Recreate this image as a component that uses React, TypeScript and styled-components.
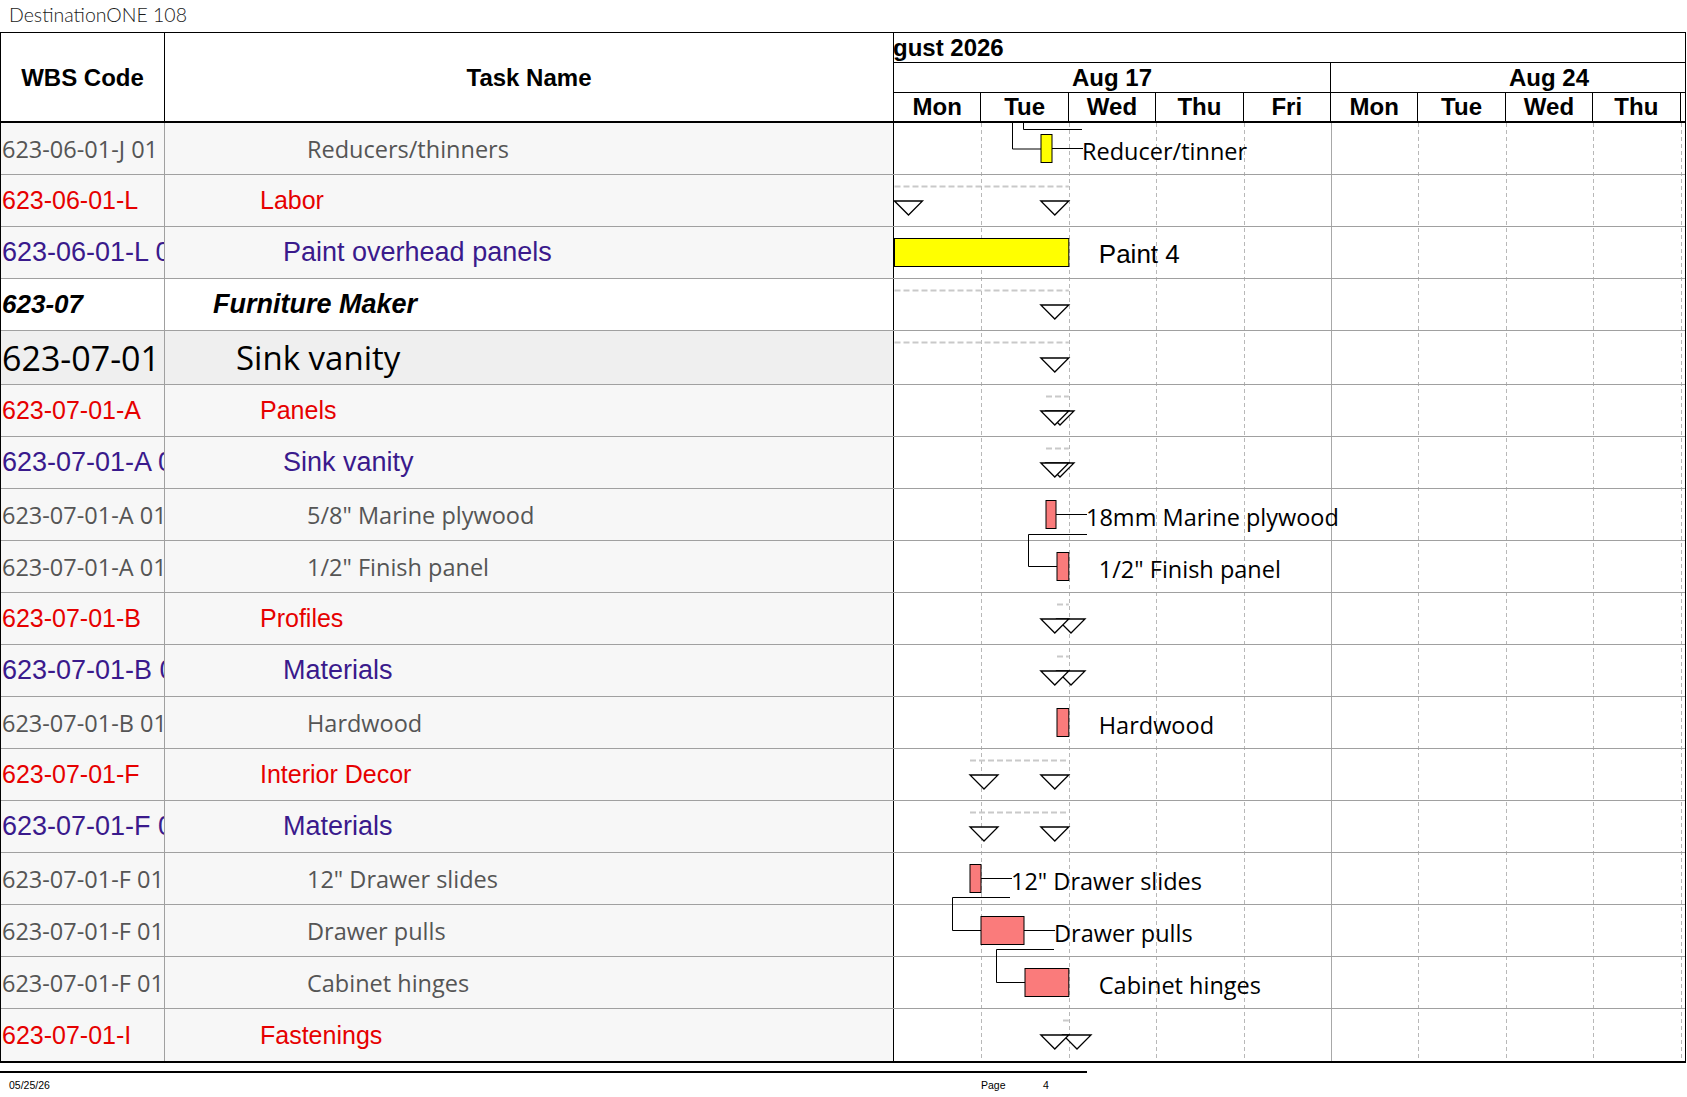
import React from 'react';
import styled, { createGlobalStyle, css } from 'styled-components';

const GlobalStyle = createGlobalStyle`
  html, body { margin: 0; padding: 0; background: #fff; }
  body { font-family: "Liberation Sans", Arial, sans-serif; color: #000; }
  *, *::before, *::after { box-sizing: border-box; }
`;

const DAY = 87.4;
const WBS_W = 164;
const TASK_W = 729;
const GANTT_W = 791;
const GRID_GRAY = '#a0a0a0';

type Kind = 'gray' | 'red' | 'purple' | 'group' | 'major';

interface TaskRow {
  wbs: string;
  name: string;
  kind: Kind;
  h: number;
}

const rows: TaskRow[] = [
  { wbs: '623-06-01-J 01', name: 'Reducers/thinners', kind: 'gray', h: 52 },
  { wbs: '623-06-01-L', name: 'Labor', kind: 'red', h: 52 },
  { wbs: '623-06-01-L 01', name: 'Paint overhead panels', kind: 'purple', h: 52 },
  { wbs: '623-07', name: 'Furniture Maker', kind: 'group', h: 52 },
  { wbs: '623-07-01', name: 'Sink vanity', kind: 'major', h: 54 },
  { wbs: '623-07-01-A', name: 'Panels', kind: 'red', h: 52 },
  { wbs: '623-07-01-A 01', name: 'Sink vanity', kind: 'purple', h: 52 },
  { wbs: '623-07-01-A 01.1', name: '5/8" Marine plywood', kind: 'gray', h: 52 },
  { wbs: '623-07-01-A 01.2', name: '1/2" Finish panel', kind: 'gray', h: 52 },
  { wbs: '623-07-01-B', name: 'Profiles', kind: 'red', h: 52 },
  { wbs: '623-07-01-B 01', name: 'Materials', kind: 'purple', h: 52 },
  { wbs: '623-07-01-B 01.1', name: 'Hardwood', kind: 'gray', h: 52 },
  { wbs: '623-07-01-F', name: 'Interior Decor', kind: 'red', h: 52 },
  { wbs: '623-07-01-F 01', name: 'Materials', kind: 'purple', h: 52 },
  { wbs: '623-07-01-F 01.1', name: '12" Drawer slides', kind: 'gray', h: 52 },
  { wbs: '623-07-01-F 01.2', name: 'Drawer pulls', kind: 'gray', h: 52 },
  { wbs: '623-07-01-F 01.3', name: 'Cabinet hinges', kind: 'gray', h: 52 },
  { wbs: '623-07-01-I', name: 'Fastenings', kind: 'red', h: 52 },
];

const tops: number[] = [];
rows.reduce((acc, r) => {
  tops.push(acc);
  return acc + r.h;
}, 0);
const BODY_H = rows.reduce((a, r) => a + r.h, 0);

const indentFor: Record<Kind, number> = {
  group: 48,
  major: 71,
  red: 95,
  purple: 118,
  gray: 142,
};

const bgFor: Record<Kind, string> = {
  group: '#ffffff',
  major: '#efefef',
  red: '#f7f7f7',
  purple: '#f7f7f7',
  gray: '#f7f7f7',
};

const fontFor = (kind: Kind, part: 'wbs' | 'name') => {
  switch (kind) {
    case 'gray':
      return css`
        font-family: 'Open Sans', 'Liberation Sans', sans-serif;
        font-size: 23.5px;
        color: #555555;
      `;
    case 'red':
      return css`
        font-family: 'Liberation Sans', Arial, sans-serif;
        font-size: 25px;
        color: #e60000;
      `;
    case 'purple':
      return css`
        font-family: 'Liberation Sans', Arial, sans-serif;
        font-size: 27px;
        color: #3a1a8c;
      `;
    case 'group':
      return css`
        font-family: 'Liberation Sans', Arial, sans-serif;
        font-size: ${part === 'wbs' ? 26 : 27}px;
        font-weight: 700;
        font-style: italic;
        color: #000;
      `;
    case 'major':
      return css`
        font-family: 'Open Sans', 'Liberation Sans', sans-serif;
        font-size: ${part === 'wbs' ? 34 : 33}px;
        color: #000;
      `;
  }
};

const Page = styled.div`
  width: 1687px;
`;

const TitleBar = styled.div`
  height: 32px;
  padding-left: 9px;
  font-family: Lato, 'Open Sans', sans-serif;
  font-weight: 300;
  font-size: 19.5px;
  line-height: 30px;
  color: #1a1a1a;
`;

const Frame = styled.div`
  width: 1686px;
  border: 1px solid #000;
  border-bottom-width: 2px;
`;

const HeaderGrid = styled.div`
  display: grid;
  grid-template-columns: ${WBS_W}px ${TASK_W}px ${GANTT_W}px;
  height: 90px;
  border-bottom: 2px solid #000;
`;

const HeadLabel = styled.div`
  display: flex;
  align-items: center;
  justify-content: center;
  border-right: 1px solid #000;
  font-weight: 700;
  font-size: 24px;
  padding-top: 2px;
`;

const Timescale = styled.div`
  display: flex;
  flex-direction: column;
  overflow: hidden;
  width: ${GANTT_W}px;
`;

const Tier = styled.div<{ $h: number; $last?: boolean }>`
  display: flex;
  flex: none;
  height: ${(p) => p.$h}px;
  border-bottom: ${(p) => (p.$last ? 'none' : '1px solid #000')};
  font-weight: 700;
  font-size: 24px;
  white-space: nowrap;
`;

const MonthCell = styled.div`
  display: flex;
  align-items: center;
  flex: none;
  width: 100%;
`;

const MonthText = styled.span`
  margin-left: -33px;
`;

const ScaleCell = styled.div<{ $w: number }>`
  display: flex;
  align-items: center;
  justify-content: center;
  flex: none;
  width: ${(p) => p.$w}px;
  border-right: 1px solid #000;
`;

const Body = styled.div`
  display: flex;
`;

const RowsCol = styled.div`
  width: ${WBS_W + TASK_W}px;
  flex: none;
`;

const TableRow = styled.div<{ $h: number; $bg: string; $last?: boolean }>`
  display: grid;
  grid-template-columns: ${WBS_W}px ${TASK_W}px;
  height: ${(p) => p.$h}px;
  background: ${(p) => p.$bg};
  border-bottom: ${(p) => (p.$last ? 'none' : `1px solid ${GRID_GRAY}`)};
`;

const WbsCell = styled.div<{ $kind: Kind }>`
  display: flex;
  align-items: center;
  padding-left: 1px;
  border-right: 1px solid ${GRID_GRAY};
  overflow: hidden;
  white-space: nowrap;
  ${(p) => fontFor(p.$kind, 'wbs')}
`;

const NameCell = styled.div<{ $kind: Kind }>`
  display: flex;
  align-items: center;
  padding-left: ${(p) => indentFor[p.$kind]}px;
  border-right: 1px solid #000;
  overflow: hidden;
  white-space: nowrap;
  ${(p) => fontFor(p.$kind, 'name')}
`;

const GanttSvg = styled.svg`
  display: block;
  flex: none;
  width: ${GANTT_W}px;
  background: #fff;
`;

const FooterRule = styled.div`
  width: 1087px;
  margin-top: 8px;
  border-top: 2px solid #000;
`;

const FooterRow = styled.div`
  display: grid;
  grid-template-columns: 972px 62px auto;
  padding-left: 9px;
  margin-top: 6px;
  font-family: 'Liberation Sans Narrow', 'Liberation Sans', Arial, sans-serif;
  font-size: 10.5px;
  line-height: 12px;
  color: #000;
`;

/* ---------- Gantt drawing ---------- */

interface Bar {
  row: number;
  x1: number;
  x2: number;
  color: string;
  label: string;
  arial?: boolean;
  link?: boolean;
}

interface Summary {
  row: number;
  x1: number;
  x2: number;
  start: boolean;
  end: boolean;
}

const END = 2 * DAY; // end of Tuesday
const YELLOW = '#ffff00';
const SALMON = '#fa7b7b';

const bars: Bar[] = [
  { row: 0, x1: 147, x2: 158, color: YELLOW, label: 'Reducer/tinner', link: true },
  { row: 2, x1: 0.5, x2: END, color: YELLOW, label: 'Paint 4', arial: true },
  { row: 7, x1: 152, x2: 162, color: SALMON, label: '18mm Marine plywood', link: true },
  { row: 8, x1: 163, x2: END, color: SALMON, label: '1/2" Finish panel' },
  { row: 11, x1: 163, x2: END, color: SALMON, label: 'Hardwood' },
  { row: 14, x1: 76, x2: 87, color: SALMON, label: '12" Drawer slides', link: true },
  { row: 15, x1: 87, x2: 130, color: SALMON, label: 'Drawer pulls', link: true },
  { row: 16, x1: 131, x2: END, color: SALMON, label: 'Cabinet hinges' },
];

const summaries: Summary[] = [
  { row: 1, x1: 0.5, x2: END, start: true, end: true },
  { row: 3, x1: 0.5, x2: END, start: false, end: true },
  { row: 4, x1: 0.5, x2: END, start: false, end: true },
  { row: 5, x1: 152, x2: END, start: true, end: true },
  { row: 6, x1: 152, x2: END, start: true, end: true },
  { row: 9, x1: 163, x2: END, start: true, end: true },
  { row: 10, x1: 163, x2: END, start: true, end: true },
  { row: 12, x1: 76, x2: END, start: true, end: true },
  { row: 13, x1: 76, x2: END, start: true, end: true },
  { row: 17, x1: 169, x2: END, start: true, end: true },
];

const links: string[] = [
  '129.5,0 129.5,6.5 188,6.5',
  '118.5,0 118.5,26 147,26',
  `193,${tops[7] + 45.5} 134.5,${tops[7] + 45.5} 134.5,${tops[8] + 25.5} 163,${tops[8] + 25.5}`,
  `116,${tops[14] + 44.5} 58.5,${tops[14] + 44.5} 58.5,${tops[15] + 25.5} 87,${tops[15] + 25.5}`,
  `160,${tops[15] + 44.5} 102.5,${tops[15] + 44.5} 102.5,${tops[16] + 25.5} 131,${tops[16] + 25.5}`,
];

const tri = (x: number, y: number) => `${x},${y} ${x + 28},${y} ${x + 14},${y + 14}`;

const GanttChart: React.FC = () => (
  <GanttSvg viewBox={`0 0 ${GANTT_W} ${BODY_H}`} height={BODY_H}>
    {/* day grid */}
    {Array.from({ length: 9 }, (_, i) => i + 1).map((k) => {
      const x = Math.round(k * DAY) + 0.5;
      return (
        <line
          key={`v${k}`}
          x1={x}
          x2={x}
          y1={0}
          y2={BODY_H}
          stroke={k === 5 ? '#a8a8a8' : '#b8b8b8'}
          strokeWidth={1}
          strokeDasharray={k === 5 ? undefined : '4 3'}
        />
      );
    })}
    {/* row lines */}
    {rows.slice(0, -1).map((r, i) => (
      <line
        key={`h${i}`}
        x1={0}
        x2={GANTT_W}
        y1={tops[i] + r.h - 0.5}
        y2={tops[i] + r.h - 0.5}
        stroke={GRID_GRAY}
        strokeWidth={1}
      />
    ))}
    {/* summary dashed tracks */}
    {summaries.map((s) => (
      <line
        key={`s${s.row}`}
        x1={s.x1}
        x2={s.x2}
        y1={tops[s.row] + 11.5}
        y2={tops[s.row] + 11.5}
        stroke="#c9c9c9"
        strokeWidth={2}
        strokeDasharray="6 3"
      />
    ))}
    {/* links */}
    {links.map((p, i) => (
      <polyline key={`l${i}`} points={p} fill="none" stroke="#000" strokeWidth={1} />
    ))}
    {/* bars */}
    {bars.map((b) => {
      const top = tops[b.row];
      const mid = top + 25.5;
      return (
        <g key={`b${b.row}`}>
          {b.link && <line x1={b.x2} x2={b.x2 + 31} y1={mid} y2={mid} stroke="#000" strokeWidth={1} />}
          <rect
            x={b.x1}
            y={top + 11.5}
            width={b.x2 - b.x1}
            height={28}
            fill={b.color}
            stroke="#000"
            strokeWidth={1}
          />
          <text
            x={b.x2 + 30}
            y={mid + (b.arial ? 1 : 2)}
            dominantBaseline="central"
            fontFamily={b.arial ? "'Liberation Sans', Arial, sans-serif" : "'Open Sans', 'Liberation Sans', sans-serif"}
            fontSize={b.arial ? 26 : 23.5}
            fill="#000"
          >
            {b.label}
          </text>
        </g>
      );
    })}
    {/* milestones / summary ends */}
    {summaries.map((s) => {
      const y = tops[s.row] + 26 + (rows[s.row].h - 52) / 2;
      return (
        <g key={`t${s.row}`}>
          {s.start && <polygon points={tri(s.x1, y)} fill="#fff" stroke="#000" strokeWidth={1.3} />}
          {s.end && <polygon points={tri(s.x2 - 28, y)} fill="#fff" stroke="#000" strokeWidth={1.3} />}
        </g>
      );
    })}
  </GanttSvg>
);

const days = ['Mon', 'Tue', 'Wed', 'Thu', 'Fri', 'Mon', 'Tue', 'Wed', 'Thu', 'Fri'];

export default function App() {
  return (
    <Page>
      <GlobalStyle />
      <TitleBar>DestinationONE 108</TitleBar>
      <Frame>
        <HeaderGrid>
          <HeadLabel>WBS Code</HeadLabel>
          <HeadLabel>Task Name</HeadLabel>
          <Timescale>
            <Tier $h={30}>
              <MonthCell>
                <MonthText>August 2026</MonthText>
              </MonthCell>
            </Tier>
            <Tier $h={30}>
              <ScaleCell $w={DAY * 5}>Aug 17</ScaleCell>
              <ScaleCell $w={DAY * 5}>Aug 24</ScaleCell>
            </Tier>
            <Tier $h={28} $last>
              {days.map((d, i) => (
                <ScaleCell key={i} $w={DAY}>
                  {d}
                </ScaleCell>
              ))}
            </Tier>
          </Timescale>
        </HeaderGrid>
        <Body>
          <RowsCol>
            {rows.map((r, i) => (
              <TableRow key={i} $h={r.h} $bg={bgFor[r.kind]} $last={i === rows.length - 1}>
                <WbsCell $kind={r.kind}>{r.wbs}</WbsCell>
                <NameCell $kind={r.kind}>{r.name}</NameCell>
              </TableRow>
            ))}
          </RowsCol>
          <GanttChart />
        </Body>
      </Frame>
      <FooterRule />
      <FooterRow>
        <span>05/25/26</span>
        <span>Page</span>
        <span>4</span>
      </FooterRow>
    </Page>
  );
}
